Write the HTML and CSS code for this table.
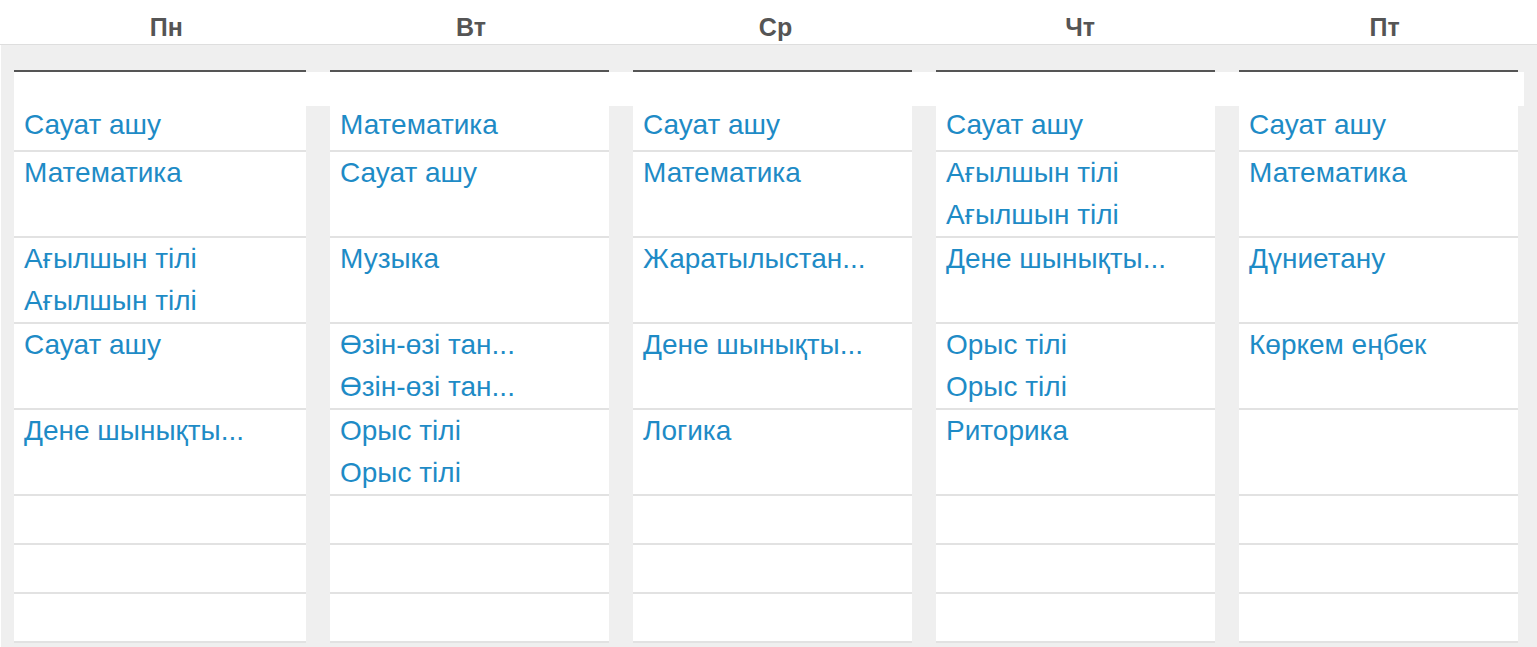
FILE: index.html
```html
<!DOCTYPE html>
<html lang="kk">
<head>
    <meta charset="UTF-8">
    <meta name="viewport" content="width=device-width, initial-scale=1.0">
    <title>Сабақ кестесі</title>
    <link rel="stylesheet" href="styles.css">
</head>
<body>
    <header class="days">
        <div>Пн</div>
        <div>Вт</div>
        <div>Ср</div>
        <div>Чт</div>
        <div>Пт</div>
    </header>

    <section class="board">
        <div class="cols rules">
            <div></div><div></div><div></div><div></div><div></div>
        </div>
        <div class="band"></div>

        <div class="cols lessons">
            <!-- 1 -->
            <div class="cell first"><a href="#">Сауат ашу</a></div>
            <div class="cell first"><a href="#">Математика</a></div>
            <div class="cell first"><a href="#">Сауат ашу</a></div>
            <div class="cell first"><a href="#">Сауат ашу</a></div>
            <div class="cell first"><a href="#">Сауат ашу</a></div>
            <!-- 2 -->
            <div class="cell"><a href="#">Математика</a></div>
            <div class="cell"><a href="#">Сауат ашу</a></div>
            <div class="cell"><a href="#">Математика</a></div>
            <div class="cell"><a href="#">Ағылшын тілі</a><a href="#">Ағылшын тілі</a></div>
            <div class="cell"><a href="#">Математика</a></div>
            <!-- 3 -->
            <div class="cell"><a href="#">Ағылшын тілі</a><a href="#">Ағылшын тілі</a></div>
            <div class="cell"><a href="#">Музыка</a></div>
            <div class="cell"><a href="#">Жаратылыстан...</a></div>
            <div class="cell"><a href="#">Дене шынықты...</a></div>
            <div class="cell"><a href="#">Дүниетану</a></div>
            <!-- 4 -->
            <div class="cell"><a href="#">Сауат ашу</a></div>
            <div class="cell"><a href="#">Өзін-өзі тан...</a><a href="#">Өзін-өзі тан...</a></div>
            <div class="cell"><a href="#">Дене шынықты...</a></div>
            <div class="cell"><a href="#">Орыс тілі</a><a href="#">Орыс тілі</a></div>
            <div class="cell"><a href="#">Көркем еңбек</a></div>
            <!-- 5 -->
            <div class="cell"><a href="#">Дене шынықты...</a></div>
            <div class="cell"><a href="#">Орыс тілі</a><a href="#">Орыс тілі</a></div>
            <div class="cell"><a href="#">Логика</a></div>
            <div class="cell"><a href="#">Риторика</a></div>
            <div class="cell"></div>
            <!-- 6-8 -->
            <div class="cell empty"></div><div class="cell empty"></div><div class="cell empty"></div><div class="cell empty"></div><div class="cell empty"></div>
            <div class="cell empty"></div><div class="cell empty"></div><div class="cell empty"></div><div class="cell empty"></div><div class="cell empty"></div>
            <div class="cell empty"></div><div class="cell empty"></div><div class="cell empty"></div><div class="cell empty"></div><div class="cell empty"></div>
        </div>
    </section>
</body>
</html>
```

FILE: styles.css
```css
body {
    font-family: "Liberation Sans", Arial, sans-serif;
    margin: 0;
    padding: 0;
    background-color: white;
    overflow: hidden;
}

.days {
    display: grid;
    grid-template-columns: repeat(5, 1fr);
    height: 44px;
    padding-left: 14px;
    border-bottom: 1px solid #dedede;
}

.days div {
    text-align: center;
    font-weight: bold;
    font-size: 25px;
    line-height: 54px;
    color: #555;
}

.board {
    background-color: #efefef;
    margin-left: 1px;
    padding: 25px 0 10px 13px;
    height: 600px;
}

.cols {
    display: grid;
    grid-template-columns: 292px repeat(4, 279px);
    column-gap: 24px;
}

.rules div {
    height: 2px;
    background-color: #555;
}

.band {
    height: 34px;
    margin-right: 13px;
    background-color: white;
}

.cell {
    background-color: white;
    border-bottom: 2px solid #e2e2e2;
    padding-left: 10px;
    min-height: 43px;
}

.cell.first {
    min-height: 44px;
}

.cell.first a {
    line-height: 38px;
}

.cell.empty {
    height: 47px;
}

.cell a {
    display: block;
    font-size: 28px;
    line-height: 42px;
    color: #1e8bc6;
    text-decoration: none;
    white-space: nowrap;
}
```
